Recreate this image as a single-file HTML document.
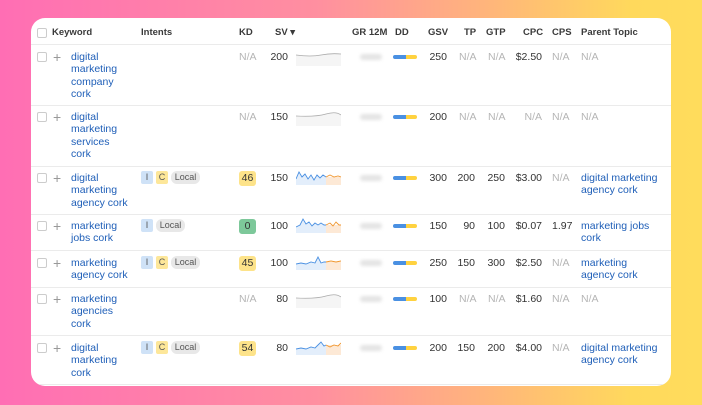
<!DOCTYPE html>
<html><head><meta charset="utf-8"><style>
*{margin:0;padding:0;box-sizing:border-box}
body{width:702px;height:405px;overflow:hidden;background:linear-gradient(90deg,#ff6eb4 0%,#ff8fa0 45%,#ffb67a 70%,#ffd95c 90%,#ffdc5c 100%);font-family:"Liberation Sans",sans-serif;font-size:10.5px;color:#333;position:relative}
.card{position:absolute;left:31px;top:18px;width:640px;height:368px;background:#fff;border-radius:14px;overflow:hidden}
.a{position:absolute;line-height:12.3px;white-space:nowrap}
.h{font-weight:bold;color:#3a3a3a;font-size:9.5px}
.k{color:#1f5fb8}
.g{color:#b5b5b5}
.r{text-align:right}
.cb{position:absolute;width:10px;height:10px;border:1px solid #ccc;border-radius:2px}
.pl{position:absolute;color:#999;font-size:14px;line-height:12px}
.sep{position:absolute;left:0;right:0;height:1px;background:#ebebeb}
.tag{position:absolute;height:13px;line-height:13px;font-size:9px;text-align:center;border-radius:2px;color:#555}
.ti{background:#cfe2f7;width:12px}
.tc{background:#fde79a;width:12px}
.tl{background:#e8e8e8;width:29px;border-radius:6px}
.kd{position:absolute;width:17px;height:15px;line-height:15px;text-align:center;border-radius:3px;font-size:10.5px;color:#333}
.blur{position:absolute;width:22px;height:6px;background:#e4e4e4;filter:blur(1.5px);border-radius:3px}
.dd{position:absolute;width:24px;height:4px;border-radius:2px;background:linear-gradient(90deg,#4a90e2 0,#4a90e2 55%,#ffd23f 55%)}
</style></head><body>
<div class="card">
<div class="cb" style="left:6px;top:10px"></div>
<div class="a h" style="left:21px;top:9px">Keyword</div>
<div class="a h" style="left:110px;top:9px">Intents</div>
<div class="a h" style="left:208px;top:9px">KD</div>
<div class="a h" style="left:244px;top:9px">SV ▾</div>
<div class="a h" style="left:321px;top:9px">GR 12M</div>
<div class="a h" style="left:364px;top:9px">DD</div>
<div class="a h" style="left:397px;top:9px">GSV</div>
<div class="a h" style="left:433px;top:9px">TP</div>
<div class="a h" style="left:455px;top:9px">GTP</div>
<div class="a h" style="left:492px;top:9px">CPC</div>
<div class="a h" style="left:521px;top:9px">CPS</div>
<div class="a h" style="left:550px;top:9px">Parent Topic</div>
<div class="sep" style="top:26px"></div>

<div class="cb" style="left:6px;top:34px"></div><div class="pl" style="left:22px;top:33px">+</div>
<div class="a k" style="left:40px;top:33px">digital<br>marketing<br>company<br>cork</div>
<div class="a g" style="left:208px;top:33px">N/A</div>
<div class="a r" style="left:230px;width:27px;top:33px">200</div>
<svg style="position:absolute;left:265px;top:34px" width="45" height="14"><path d="M0 3 Q15 5 25 3 T45 2 L45 14 L0 14Z" fill="#f5f5f5"/><path d="M0 3 Q15 5 25 3 T45 2" fill="none" stroke="#aaa" stroke-width=".8"/></svg>
<div class="blur" style="left:329px;top:36px"></div><div class="dd" style="left:362px;top:37px"></div>
<div class="a r" style="left:390px;width:26px;top:33px">250</div>
<div class="a g" style="left:428px;top:33px">N/A</div><div class="a g" style="left:457px;top:33px">N/A</div>
<div class="a r" style="left:480px;width:31px;top:33px">$2.50</div>
<div class="a g" style="left:521px;top:33px">N/A</div><div class="a g" style="left:550px;top:33px">N/A</div>
<div class="sep" style="top:87px"></div>

<div class="cb" style="left:6px;top:94px"></div><div class="pl" style="left:22px;top:93px">+</div>
<div class="a k" style="left:40px;top:93px">digital<br>marketing<br>services<br>cork</div>
<div class="a g" style="left:208px;top:93px">N/A</div>
<div class="a r" style="left:230px;width:27px;top:93px">150</div>
<svg style="position:absolute;left:265px;top:94px" width="45" height="14"><path d="M0 4 Q20 5 30 2 T45 3 L45 14 L0 14Z" fill="#f5f5f5"/><path d="M0 4 Q20 5 30 2 T45 3" fill="none" stroke="#aaa" stroke-width=".8"/></svg>
<div class="blur" style="left:329px;top:96px"></div><div class="dd" style="left:362px;top:97px"></div>
<div class="a r" style="left:390px;width:26px;top:93px">200</div>
<div class="a g" style="left:428px;top:93px">N/A</div><div class="a g" style="left:457px;top:93px">N/A</div>
<div class="a g r" style="left:480px;width:31px;top:93px">N/A</div>
<div class="a g" style="left:521px;top:93px">N/A</div><div class="a g" style="left:550px;top:93px">N/A</div>
<div class="sep" style="top:148px"></div>

<div class="cb" style="left:6px;top:155px"></div><div class="pl" style="left:22px;top:154px">+</div>
<div class="a k" style="left:40px;top:154px">digital<br>marketing<br>agency cork</div>
<div class="tag ti" style="left:110px;top:153px">I</div><div class="tag tc" style="left:125px;top:153px">C</div><div class="tag tl" style="left:140px;top:153px">Local</div>
<div class="kd" style="left:208px;top:153px;background:#fde38a">46</div>
<div class="a r" style="left:230px;width:27px;top:154px">150</div>
<svg style="position:absolute;left:265px;top:151px" width="45" height="16"><path d="M0 10 L3 3 L6 8 L9 5 L12 10 L15 6 L18 11 L21 6 L24 9 L27 6 L30 8 L30 16 L0 16Z" fill="#e3eefb"/><path d="M30 8 L45 8 L45 16 L30 16Z" fill="#fde9d6"/><path d="M0 10 L3 3 L6 8 L9 5 L12 10 L15 6 L18 11 L21 6 L24 9 L27 6 L30 8" fill="none" stroke="#4a90e2" stroke-width=".9"/><path d="M30 8 L34 6 L38 8 L42 7 L45 8" fill="none" stroke="#f0962e" stroke-width=".9"/></svg>
<div class="blur" style="left:329px;top:157px"></div><div class="dd" style="left:362px;top:158px"></div>
<div class="a r" style="left:390px;width:26px;top:154px">300</div>
<div class="a r" style="left:420px;width:24px;top:154px">200</div><div class="a r" style="left:450px;width:24px;top:154px">250</div>
<div class="a r" style="left:480px;width:31px;top:154px">$3.00</div>
<div class="a g" style="left:521px;top:154px">N/A</div><div class="a k" style="left:550px;top:154px">digital marketing<br>agency cork</div>
<div class="sep" style="top:196px"></div>

<div class="cb" style="left:6px;top:203px"></div><div class="pl" style="left:22px;top:202px">+</div>
<div class="a k" style="left:40px;top:202px">marketing<br>jobs cork</div>
<div class="tag ti" style="left:110px;top:201px">I</div><div class="tag tl" style="left:125px;top:201px">Local</div>
<div class="kd" style="left:208px;top:201px;background:#7dc89a">0</div>
<div class="a r" style="left:230px;width:27px;top:202px">100</div>
<svg style="position:absolute;left:265px;top:199px" width="45" height="16"><path d="M0 10 L4 8 L7 2 L10 7 L13 5 L16 9 L19 6 L22 8 L25 6 L28 8 L30 8 L30 16 L0 16Z" fill="#e3eefb"/><path d="M30 8 L45 8 L45 16 L30 16Z" fill="#fde9d6"/><path d="M0 10 L4 8 L7 2 L10 7 L13 5 L16 9 L19 6 L22 8 L25 6 L28 8 L30 8" fill="none" stroke="#4a90e2" stroke-width=".9"/><path d="M30 8 L34 6 L37 9 L40 5 L43 8 L45 8" fill="none" stroke="#f0962e" stroke-width=".9"/></svg>
<div class="blur" style="left:329px;top:205px"></div><div class="dd" style="left:362px;top:206px"></div>
<div class="a r" style="left:390px;width:26px;top:202px">150</div>
<div class="a r" style="left:420px;width:24px;top:202px">90</div><div class="a r" style="left:450px;width:24px;top:202px">100</div>
<div class="a r" style="left:480px;width:31px;top:202px">$0.07</div>
<div class="a" style="left:521px;top:202px">1.97</div><div class="a k" style="left:550px;top:202px">marketing jobs<br>cork</div>
<div class="sep" style="top:232px"></div>

<div class="cb" style="left:6px;top:240px"></div><div class="pl" style="left:22px;top:239px">+</div>
<div class="a k" style="left:40px;top:239px">marketing<br>agency cork</div>
<div class="tag ti" style="left:110px;top:238px">I</div><div class="tag tc" style="left:125px;top:238px">C</div><div class="tag tl" style="left:140px;top:238px">Local</div>
<div class="kd" style="left:208px;top:238px;background:#fde38a">45</div>
<div class="a r" style="left:230px;width:27px;top:239px">100</div>
<svg style="position:absolute;left:265px;top:236px" width="45" height="16"><path d="M0 10 L5 9 L10 10 L15 8 L19 9 L22 3 L25 9 L28 8 L30 8 L30 16 L0 16Z" fill="#e3eefb"/><path d="M30 8 L45 8 L45 16 L30 16Z" fill="#fde9d6"/><path d="M0 10 L5 9 L10 10 L15 8 L19 9 L22 3 L25 9 L28 8 L30 8" fill="none" stroke="#4a90e2" stroke-width=".9"/><path d="M30 8 L35 7 L40 8 L45 7" fill="none" stroke="#f0962e" stroke-width=".9"/></svg>
<div class="blur" style="left:329px;top:242px"></div><div class="dd" style="left:362px;top:243px"></div>
<div class="a r" style="left:390px;width:26px;top:239px">250</div>
<div class="a r" style="left:420px;width:24px;top:239px">150</div><div class="a r" style="left:450px;width:24px;top:239px">300</div>
<div class="a r" style="left:480px;width:31px;top:239px">$2.50</div>
<div class="a g" style="left:521px;top:239px">N/A</div><div class="a k" style="left:550px;top:239px">marketing<br>agency cork</div>
<div class="sep" style="top:269px"></div>

<div class="cb" style="left:6px;top:276px"></div><div class="pl" style="left:22px;top:275px">+</div>
<div class="a k" style="left:40px;top:275px">marketing<br>agencies<br>cork</div>
<div class="a g" style="left:208px;top:275px">N/A</div>
<div class="a r" style="left:230px;width:27px;top:275px">80</div>
<svg style="position:absolute;left:265px;top:276px" width="45" height="14"><path d="M0 4 Q20 5 30 2 T45 3 L45 14 L0 14Z" fill="#f5f5f5"/><path d="M0 4 Q20 5 30 2 T45 3" fill="none" stroke="#aaa" stroke-width=".8"/></svg>
<div class="blur" style="left:329px;top:278px"></div><div class="dd" style="left:362px;top:279px"></div>
<div class="a r" style="left:390px;width:26px;top:275px">100</div>
<div class="a g" style="left:428px;top:275px">N/A</div><div class="a g" style="left:457px;top:275px">N/A</div>
<div class="a r" style="left:480px;width:31px;top:275px">$1.60</div>
<div class="a g" style="left:521px;top:275px">N/A</div><div class="a g" style="left:550px;top:275px">N/A</div>
<div class="sep" style="top:317px"></div>

<div class="cb" style="left:6px;top:325px"></div><div class="pl" style="left:22px;top:324px">+</div>
<div class="a k" style="left:40px;top:324px">digital<br>marketing<br>cork</div>
<div class="tag ti" style="left:110px;top:323px">I</div><div class="tag tc" style="left:125px;top:323px">C</div><div class="tag tl" style="left:140px;top:323px">Local</div>
<div class="kd" style="left:208px;top:323px;background:#fde38a">54</div>
<div class="a r" style="left:230px;width:27px;top:324px">80</div>
<svg style="position:absolute;left:265px;top:321px" width="45" height="16"><path d="M0 10 L5 9 L10 10 L15 8 L19 9 L22 6 L25 3 L28 7 L30 6 L30 16 L0 16Z" fill="#e3eefb"/><path d="M30 6 L45 6 L45 16 L30 16Z" fill="#fde9d6"/><path d="M0 10 L5 9 L10 10 L15 8 L19 9 L22 6 L25 3 L28 7 L30 6" fill="none" stroke="#4a90e2" stroke-width=".9"/><path d="M30 6 L34 8 L38 6 L42 7 L45 4" fill="none" stroke="#f0962e" stroke-width=".9"/></svg>
<div class="blur" style="left:329px;top:327px"></div><div class="dd" style="left:362px;top:328px"></div>
<div class="a r" style="left:390px;width:26px;top:324px">200</div>
<div class="a r" style="left:420px;width:24px;top:324px">150</div><div class="a r" style="left:450px;width:24px;top:324px">200</div>
<div class="a r" style="left:480px;width:31px;top:324px">$4.00</div>
<div class="a g" style="left:521px;top:324px">N/A</div><div class="a k" style="left:550px;top:324px">digital marketing<br>agency cork</div>
<div class="sep" style="top:366px"></div>
</div>
</body></html>
